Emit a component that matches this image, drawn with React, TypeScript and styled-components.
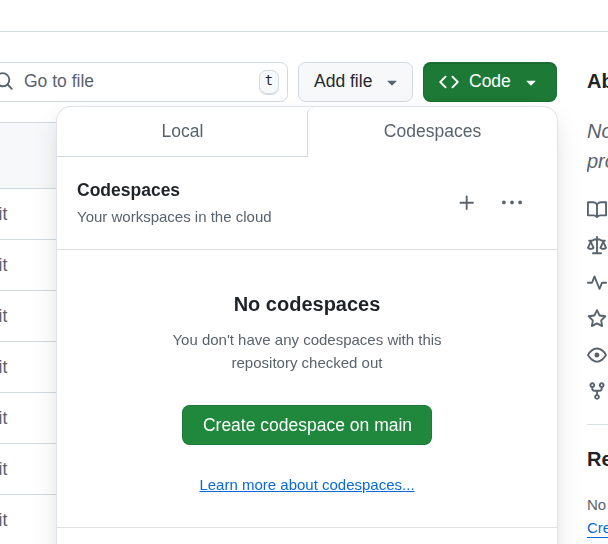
import React from "react";
import styled, { createGlobalStyle, css } from "styled-components";

const GlobalStyle = createGlobalStyle`
  *, *::before, *::after { box-sizing: border-box; }
  html, body { margin: 0; padding: 0; background: #fff; }
  body {
    overflow: hidden;
    font-family: "Liberation Sans", Arial, sans-serif;
    font-size: 17.5px;
    color: #1f2328;
  }
  h2, h3, p { margin: 0; }
  button { font-family: inherit; margin: 0; }
`;

const paths = {
  search:
    "M10.68 11.74a6 6 0 0 1-7.922-8.982 6 6 0 0 1 8.982 7.922l3.04 3.04a.749.749 0 0 1-.326 1.275.749.749 0 0 1-.734-.215ZM11.5 7a4.499 4.499 0 1 0-8.997 0A4.499 4.499 0 0 0 11.5 7Z",
  triangle:
    "m4.427 7.427 3.396 3.396a.25.25 0 0 0 .354 0l3.396-3.396A.25.25 0 0 0 11.396 7H4.604a.25.25 0 0 0-.177.427Z",
  code: "m11.28 3.22 4.25 4.25a.75.75 0 0 1 0 1.06l-4.25 4.25a.749.749 0 0 1-1.275-.326.749.749 0 0 1 .215-.734L13.94 8l-3.72-3.72a.749.749 0 0 1 .326-1.275.749.749 0 0 1 .734.215Zm-6.56 0a.751.751 0 0 1 1.042.018.751.751 0 0 1 .018 1.042L2.06 8l3.72 3.72a.749.749 0 0 1-.326 1.275.749.749 0 0 1-.734-.215L.47 8.53a.75.75 0 0 1 0-1.06Z",
  book: "M0 1.75A.75.75 0 0 1 .75 1h4.253c1.227 0 2.317.59 3 1.501A3.743 3.743 0 0 1 11.006 1h4.245a.75.75 0 0 1 .75.75v10.5a.75.75 0 0 1-.75.75h-4.507a2.25 2.25 0 0 0-1.591.659l-.622.621a.75.75 0 0 1-1.06 0l-.622-.621A2.25 2.25 0 0 0 5.258 13H.75a.75.75 0 0 1-.75-.75Zm7.251 10.324.004-5.073-.002-2.253A2.25 2.25 0 0 0 5.003 2.5H1.5v9h3.757a3.75 3.75 0 0 1 1.994.574ZM8.755 4.75l-.004 7.322a3.752 3.752 0 0 1 1.992-.572H14.5v-9h-3.495a2.25 2.25 0 0 0-2.25 2.25Z",
  law: "M8.75.75V2h.985c.304 0 .603.08.867.231l1.29.736c.038.022.08.033.124.033h2.234a.75.75 0 0 1 0 1.5h-.427l2.111 4.692a.75.75 0 0 1-.154.838l-.53-.53.529.531-.001.002-.002.002-.006.006-.006.005-.01.01-.045.04c-.21.176-.441.327-.686.45C14.556 10.78 13.88 11 13 11a4.498 4.498 0 0 1-2.023-.454 3.544 3.544 0 0 1-.686-.45l-.045-.04-.016-.015-.006-.006-.004-.004v-.001a.75.75 0 0 1-.154-.838L12.178 4.5h-.162c-.305 0-.604-.079-.868-.231l-1.29-.736a.245.245 0 0 0-.124-.033H8.75V13h2.5a.75.75 0 0 1 0 1.5h-6.5a.75.75 0 0 1 0-1.5h2.5V3.5h-.984a.245.245 0 0 0-.124.033l-1.289.737c-.265.15-.564.23-.869.23h-.162l2.112 4.692a.75.75 0 0 1-.154.838l-.53-.53.529.531-.001.002-.002.002-.006.006-.016.015-.045.04c-.21.176-.441.327-.686.45C4.556 10.78 3.88 11 3 11a4.498 4.498 0 0 1-2.023-.454 3.544 3.544 0 0 1-.686-.45l-.045-.04-.016-.015-.006-.006-.004-.004v-.001a.75.75 0 0 1-.154-.838L2.178 4.5H1.75a.75.75 0 0 1 0-1.5h2.234a.249.249 0 0 0 .125-.033l1.288-.737c.265-.15.564-.23.869-.23h.984V.75a.75.75 0 0 1 1.5 0Zm2.945 8.477c.285.135.718.273 1.305.273s1.02-.138 1.305-.273L13 6.327Zm-10 0c.285.135.718.273 1.305.273s1.02-.138 1.305-.273L3 6.327Z",
  pulse:
    "M6 2c.306 0 .582.187.696.471L10 10.731l1.304-3.26A.751.751 0 0 1 12 7h3.25a.75.75 0 0 1 0 1.5h-2.742l-1.812 4.528a.751.751 0 0 1-1.392 0L6 4.77 4.696 8.03A.75.75 0 0 1 4 8.5H.75a.75.75 0 0 1 0-1.5h2.742l1.812-4.529A.751.751 0 0 1 6 2Z",
  star: "M8 .25a.75.75 0 0 1 .673.418l1.882 3.815 4.21.612a.75.75 0 0 1 .416 1.279l-3.046 2.97.719 4.192a.751.751 0 0 1-1.088.791L8 12.347l-3.766 1.98a.75.75 0 0 1-1.088-.79l.72-4.194L.818 6.374a.75.75 0 0 1 .416-1.28l4.21-.611L7.327.668A.75.75 0 0 1 8 .25Zm0 2.445L6.615 5.5a.75.75 0 0 1-.564.41l-3.097.45 2.24 2.184a.75.75 0 0 1 .216.664l-.528 3.084 2.769-1.456a.75.75 0 0 1 .698 0l2.77 1.456-.53-3.084a.75.75 0 0 1 .216-.664l2.24-2.183-3.096-.45a.75.75 0 0 1-.564-.41L8 2.694Z",
  eye: "M8 2c1.981 0 3.671.992 4.933 2.078 1.27 1.091 2.187 2.345 2.637 3.023a1.62 1.62 0 0 1 0 1.798c-.45.678-1.367 1.932-2.637 3.023C11.67 13.008 9.981 14 8 14c-1.981 0-3.671-.992-4.933-2.078C1.797 10.83.88 9.576.43 8.898a1.62 1.62 0 0 1 0-1.798c.45-.677 1.367-1.931 2.637-3.022C4.33 2.992 6.019 2 8 2ZM1.679 7.932a.12.12 0 0 0 0 .136c.411.622 1.241 1.75 2.366 2.717C5.176 11.758 6.527 12.5 8 12.5c1.473 0 2.825-.742 3.955-1.715 1.124-.967 1.954-2.096 2.366-2.717a.12.12 0 0 0 0-.136c-.412-.621-1.242-1.75-2.366-2.717C10.824 4.242 9.473 3.5 8 3.5c-1.473 0-2.825.742-3.955 1.715-1.124.967-1.954 2.096-2.366 2.717ZM8 10a2 2 0 1 1-.001-3.999A2 2 0 0 1 8 10Z",
  fork: "M5 5.372v.878c0 .414.336.75.75.75h4.5a.75.75 0 0 0 .75-.75v-.878a2.25 2.25 0 1 1 1.5 0v.878a2.25 2.25 0 0 1-2.25 2.25h-1.5v2.128a2.251 2.251 0 1 1-1.5 0V8.5h-1.5A2.25 2.25 0 0 1 3.5 6.25v-.878a2.25 2.25 0 1 1 1.5 0ZM5 3.25a.75.75 0 1 0-1.5 0 .75.75 0 0 0 1.5 0Zm6.75.75a.75.75 0 1 0 0-1.5.75.75 0 0 0 0 1.5Zm-3 8.75a.75.75 0 1 0-1.5 0 .75.75 0 0 0 1.5 0Z",
  plus: "M7.75 2a.75.75 0 0 1 .75.75V7h4.25a.75.75 0 0 1 0 1.5H8.5v4.25a.75.75 0 0 1-1.5 0V8.5H2.75a.75.75 0 0 1 0-1.5H7V2.75A.75.75 0 0 1 7.75 2Z",
  kebab:
    "M8 9a1.5 1.5 0 1 0 0-3 1.5 1.5 0 0 0 0 3ZM1.5 9a1.5 1.5 0 1 0 0-3 1.5 1.5 0 0 0 0 3Zm13 0a1.5 1.5 0 1 0 0-3 1.5 1.5 0 0 0 0 3Z",
};

type IconName = keyof typeof paths;

const Svg = styled.svg`
  display: block;
  flex: none;
  width: 20px;
  height: 20px;
  fill: currentColor;
`;

const Icon = ({ name }: { name: IconName }) => (
  <Svg viewBox="0 0 16 16" aria-hidden="true">
    <path d={paths[name]} />
  </Svg>
);

const Page = styled.div`
  width: 608px;
  height: 544px;
  overflow: hidden;
  background: #fff;
`;

const TopBar = styled.header`
  height: 32px;
  border-bottom: 1px solid #d1d9e0;
`;

const Body = styled.main`
  display: grid;
  grid-template-columns: 557px 21px;
  column-gap: 30px;
  padding-top: 30px;
`;

const Toolbar = styled.div`
  display: flex;
  gap: 10px;
  height: 40px;
`;

const SearchField = styled.label`
  display: flex;
  flex: 1;
  margin-left: -16px;
  padding: 7px 8px 0 9px;
  border: 1px solid #d1d9e0;
  border-radius: 7.5px;
  color: #59636e;
`;

const SearchGlyph = styled.span`
  padding-top: 1px;
`;

const Placeholder = styled.span`
  flex: 1;
  margin-left: 10px;
  line-height: 23px;
`;

const Key = styled.kbd`
  display: flex;
  justify-content: center;
  width: 20px;
  height: 25px;
  border: 1px solid #d1d9e0;
  border-radius: 7.5px;
  box-shadow: inset 0 -1px 0 #d1d9e0;
  background: #f6f8fa;
  color: #1f2328;
  font-family: "DejaVu Sans Mono", monospace;
  font-size: 13.75px;
  line-height: 18px;
`;

const Button = styled.button<{ $primary?: boolean }>`
  display: flex;
  align-items: center;
  width: ${(p) => (p.$primary ? "134px" : "115px")};
  height: 40px;
  padding: 0 0 0 15px;
  border: 1px solid #d1d9e0;
  border-radius: 7.5px;
  background: #f6f8fa;
  color: #25292e;
  font-size: 17.5px;
  ${(p) =>
    p.$primary &&
    css`
      border-color: rgba(31, 35, 40, 0.15);
      background: #1c7a36;
      color: #fff;
      box-shadow: inset 0 1px 0 rgba(0, 45, 17, 0.2);
    `}
`;

const ButtonLabel = styled.span<{ $spaced?: boolean }>`
  margin-left: ${(p) => (p.$spaced ? "10px" : "0")};
  padding-bottom: 1px;
`;

const Caret = styled.span<{ $muted?: boolean }>`
  display: flex;
  margin-left: 10px;
  color: ${(p) => (p.$muted ? "#59636e" : "#fff")};
`;

const MenuAnchor = styled.div`
  position: relative;
`;

const Popover = styled.section`
  position: absolute;
  z-index: 2;
  top: 44px;
  right: -1px;
  width: 502px;
  height: 520px;
  overflow: hidden;
  border: 1px solid rgba(209, 217, 224, 0.75);
  border-radius: 15px;
  background: #fff;
  will-change: transform;
`;

const PopoverShadow = styled.div`
  position: absolute;
  z-index: 1;
  top: 45px;
  right: 0;
  width: 500px;
  height: 518px;
  border-radius: 15px;
  box-shadow: 0 7.5px 15px -3px rgba(37, 41, 46, 0.08),
    0 15px 30px 0 rgba(37, 41, 46, 0.1);
`;

const Tabs = styled.div`
  display: flex;
  height: 50px;
`;

const Tab = styled.div<{ $selected?: boolean }>`
  flex: none;
  width: 250px;
  padding-top: 14px;
  text-align: center;
  line-height: 20px;
  color: #59636e;
  ${(p) =>
    p.$selected
      ? css`
          border-left: 1px solid #d1d9e0;
          border-radius: 7.5px 0 0 0;
        `
      : css`
          padding-left: 1px;
          border-bottom: 1px solid #d1d9e0;
        `}
`;

const PanelHeader = styled.div`
  display: flex;
  align-items: center;
  height: 93px;
  padding: 0 35px 0 20px;
  border-bottom: 1px solid #dee2e6;
`;

const PanelHeading = styled.div`
  flex: 1;
  padding-bottom: 2px;
`;

const PanelTitle = styled.h3`
  font-size: 17.5px;
  line-height: 26px;
`;

const PanelSubtitle = styled.p`
  margin-top: 2px;
  font-size: 15px;
  line-height: 23px;
  color: #59636e;
`;

const Actions = styled.div`
  display: flex;
  gap: 25px;
  color: #59636e;
`;

const BlankSlate = styled.div`
  display: flex;
  flex-direction: column;
  align-items: center;
  height: 278px;
  padding-top: 39px;
  border-bottom: 1px solid #dee2e6;
  text-align: center;
`;

const BlankTitle = styled.h2`
  font-size: 20px;
  line-height: 30px;
`;

const BlankText = styled.p`
  width: 280px;
  margin-top: 10px;
  font-size: 15px;
  line-height: 22.5px;
  color: #59636e;
`;

const CreateButton = styled.button`
  width: 250px;
  height: 40px;
  margin-top: 31px;
  padding: 0 0 0 1px;
  border: 1px solid rgba(31, 35, 40, 0.15);
  border-radius: 7.5px;
  background: #1f883d;
  color: #fff;
  font-size: 17.5px;
`;

const LearnLink = styled.a`
  margin-top: 28px;
  font-size: 15px;
  line-height: 23px;
  color: #0969da;
  text-decoration: underline;
`;

const FileTable = styled.div`
  margin-top: 20px;
  border-top: 1px solid #d1d9e0;
`;

const FileHeader = styled.div`
  height: 65px;
  background: #f6f8fa;
`;

const FileRow = styled.div`
  display: flex;
  align-items: center;
  height: 51px;
  margin-left: -1.5px;
  border-top: 1px solid #d1d9e0;
  color: #59636e;
`;

const Sidebar = styled.aside`
  width: 21px;
  padding-top: 4px;
  overflow: hidden;
  white-space: nowrap;
`;

const SideTitle = styled.h2`
  font-size: 20px;
  line-height: 30px;
`;

const AboutText = styled.p`
  margin: 20px 0 20px;
  font-size: 20px;
  line-height: 30px;
  font-style: italic;
  color: #59636e;
`;

const Facts = styled.div`
  display: flex;
  flex-direction: column;
  gap: 16.25px;
  padding-top: 4px;
  color: #59636e;
`;

const Releases = styled.div`
  margin-top: 23px;
  padding-top: 19px;
  border-top: 1px solid #d9e0e6;
`;

const ReleaseText = styled.p`
  margin-top: 19px;
  font-size: 15px;
  line-height: 23px;
  color: #59636e;
`;

const ReleaseLink = styled.a`
  display: block;
  height: 22px;
  border-bottom: 1px solid #0969da;
  font-size: 15px;
  line-height: 23px;
  color: #0969da;
`;

const facts: IconName[] = ["book", "law", "pulse", "star", "eye", "fork"];
const rows = [0, 1, 2, 3, 4, 5, 6];

export default function App() {
  return (
    <>
      <GlobalStyle />
      <Page>
        <TopBar />
        <Body>
          <div>
            <Toolbar>
              <SearchField>
                <SearchGlyph>
                  <Icon name="search" />
                </SearchGlyph>
                <Placeholder>Go to file</Placeholder>
                <Key>t</Key>
              </SearchField>
              <Button>
                <ButtonLabel>Add file</ButtonLabel>
                <Caret $muted>
                  <Icon name="triangle" />
                </Caret>
              </Button>
              <MenuAnchor>
                <Button $primary>
                  <Icon name="code" />
                  <ButtonLabel $spaced>Code</ButtonLabel>
                  <Caret>
                    <Icon name="triangle" />
                  </Caret>
                </Button>
                <PopoverShadow />
                <Popover>
                  <Tabs>
                    <Tab>Local</Tab>
                    <Tab $selected>Codespaces</Tab>
                  </Tabs>
                  <PanelHeader>
                    <PanelHeading>
                      <PanelTitle>Codespaces</PanelTitle>
                      <PanelSubtitle>Your workspaces in the cloud</PanelSubtitle>
                    </PanelHeading>
                    <Actions>
                      <Icon name="plus" />
                      <Icon name="kebab" />
                    </Actions>
                  </PanelHeader>
                  <BlankSlate>
                    <BlankTitle>No codespaces</BlankTitle>
                    <BlankText>
                      You don't have any codespaces with this repository checked out
                    </BlankText>
                    <CreateButton>Create codespace on main</CreateButton>
                    <LearnLink>Learn more about codespaces...</LearnLink>
                  </BlankSlate>
                </Popover>
              </MenuAnchor>
            </Toolbar>
            <FileTable>
              <FileHeader />
              {rows.map((row) => (
                <FileRow key={row}>it</FileRow>
              ))}
            </FileTable>
          </div>
          <Sidebar>
            <SideTitle>Ab</SideTitle>
            <AboutText>
              No
              <br />
              pro
            </AboutText>
            <Facts>
              {facts.map((name) => (
                <Icon key={name} name={name} />
              ))}
            </Facts>
            <Releases>
              <SideTitle>Re</SideTitle>
              <ReleaseText>No</ReleaseText>
              <ReleaseLink>Cre</ReleaseLink>
            </Releases>
          </Sidebar>
        </Body>
      </Page>
    </>
  );
}
